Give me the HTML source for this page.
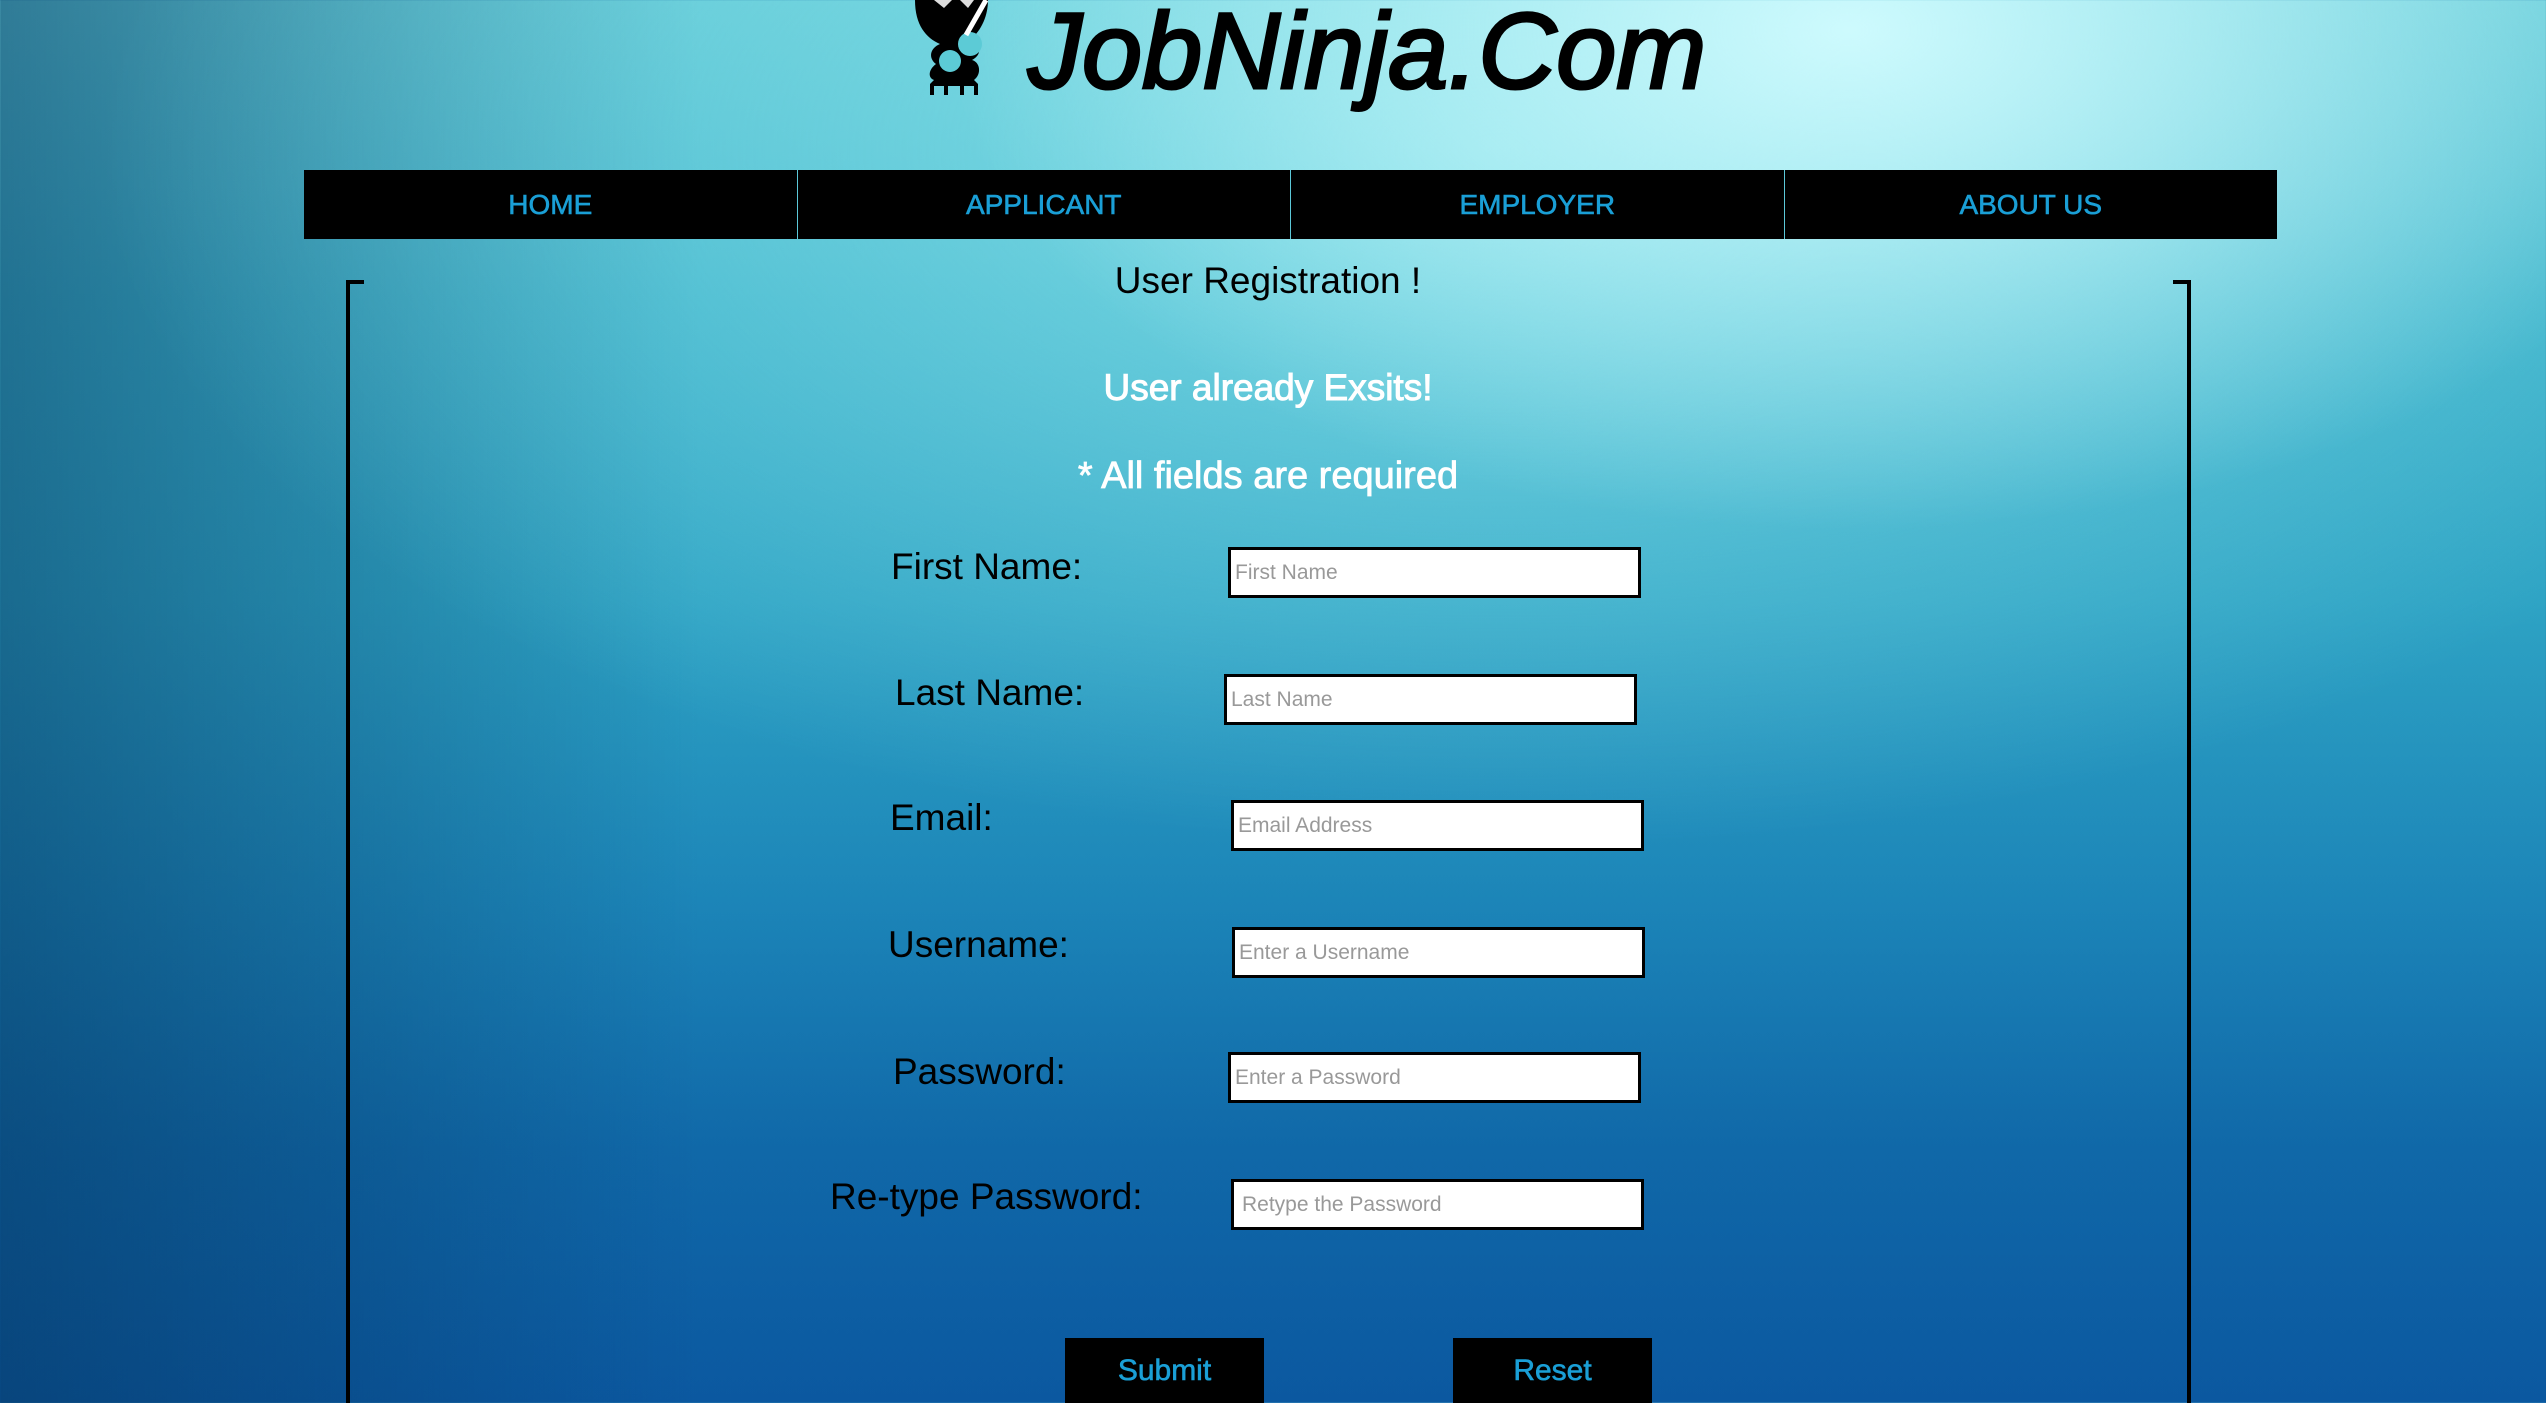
<!DOCTYPE html>
<html><head><meta charset="utf-8">
<style>
html,body{margin:0;padding:0;width:2546px;height:1403px;overflow:hidden}
body{position:relative;font-family:"Liberation Sans",sans-serif;
background:
radial-gradient(ellipse 900px 500px at 1850px 30px, rgba(210,252,255,0.95), rgba(200,250,255,0) 100%),
radial-gradient(ellipse 1400px 700px at 1500px 150px, rgba(150,235,240,0.7), rgba(150,235,240,0) 100%),
linear-gradient(90deg, rgba(5,50,90,0.5) 0px, rgba(5,50,90,0) 700px),
linear-gradient(180deg,#5cc6d4 0px,#3db2ca 300px,#2ea3c4 600px,#1c85b8 900px,#1068a8 1150px,#0b58a0 1403px);}
.abs{position:absolute}
.logo{left:1028px;top:-14px;font-size:108px;font-style:italic;color:#000;-webkit-text-stroke:3px #000;white-space:nowrap;line-height:1.2}
.nav{left:304px;top:170px;width:1973px;height:69px;background:#000;display:flex}
.nav div{flex:1;color:#1a9fd6;font-size:28px;text-align:center;line-height:69px;border-left:1px solid #5cc8d8;-webkit-text-stroke:0.6px #1a9fd6}
.nav div:first-child{border-left:none}
.bl{left:346px;top:280px;width:4px;height:1130px;background:#000}
.bt{left:346px;top:280px;width:18px;height:4px;background:#000}
.br{left:2187px;top:280px;width:4px;height:1130px;background:#000}
.brt{left:2173px;top:280px;width:18px;height:4px;background:#000}
.c{left:0;width:2536px;text-align:center;white-space:nowrap}
.lab{font-size:37px;color:#000;white-space:nowrap;line-height:1}
.inp{width:403px;height:45px;border:3px solid #000;background:#fff;color:#999;font-size:21px;line-height:45px;padding-left:4px;box-sizing:content-box}
.btn{top:1338px;width:199px;height:70px;background:#000;color:#1a9fd6;font-size:30px;text-align:center;line-height:66px;-webkit-text-stroke:0.6px #1a9fd6}
</style></head><body>
<svg class="abs" style="left:912px;top:0" width="90" height="95" viewBox="0 0 90 95">
<path d="M3 0 C3 25 14 38 28 44 C18 48 16 58 24 64 C16 70 16 78 22 80 L18 84 L18 95 L22 95 L22 86 L32 86 L32 95 L36 95 L36 86 L48 86 L48 95 L52 95 L52 86 L62 86 L62 95 L66 95 L66 84 L62 80 C70 74 68 62 60 60 C70 55 70 44 58 40 C70 30 76 15 76 0 Z" fill="#000"/>
<circle cx="58" cy="44" r="12" fill="#5ccbd6"/>
<circle cx="38" cy="61" r="11" fill="#5ccbd6"/>
<path d="M54 35 L74 0" stroke="#fff" stroke-width="5"/>
<path d="M22 0 L32 8 L40 0 Z M48 0 L56 8 L62 0 Z" fill="#ddd"/>
</svg>
<div class="abs logo">JobNinja.Com</div>
<div class="abs nav"><div>HOME</div><div>APPLICANT</div><div>EMPLOYER</div><div>ABOUT US</div></div>
<div class="abs bl"></div><div class="abs bt"></div><div class="abs br"></div><div class="abs brt"></div>
<div class="abs c" style="top:260px;font-size:37px;color:#000">User Registration !</div>
<div class="abs c" style="top:367px;font-size:37px;color:#fff;-webkit-text-stroke:1px #fff">User already Exsits!</div>
<div class="abs c" style="top:455px;font-size:38px;color:#fff;-webkit-text-stroke:0.8px #fff">* All fields are required</div>

<div class="abs lab" style="left:891px;top:548px">First Name:</div>
<div class="abs inp" style="left:1228px;top:547px">First Name</div>
<div class="abs lab" style="left:895px;top:674px">Last Name:</div>
<div class="abs inp" style="left:1224px;top:674px">Last Name</div>
<div class="abs lab" style="left:890px;top:799px">Email:</div>
<div class="abs inp" style="left:1231px;top:800px">Email Address</div>
<div class="abs lab" style="left:888px;top:926px">Username:</div>
<div class="abs inp" style="left:1232px;top:927px">Enter a Username</div>
<div class="abs lab" style="left:893px;top:1053px">Password:</div>
<div class="abs inp" style="left:1228px;top:1052px">Enter a Password</div>
<div class="abs lab" style="left:830px;top:1178px">Re-type Password:</div>
<div class="abs inp" style="left:1231px;top:1179px;padding-left:8px;width:399px">Retype the Password</div>

<div class="abs btn" style="left:1065px">Submit</div>
<div class="abs btn" style="left:1453px">Reset</div>
</body></html>
